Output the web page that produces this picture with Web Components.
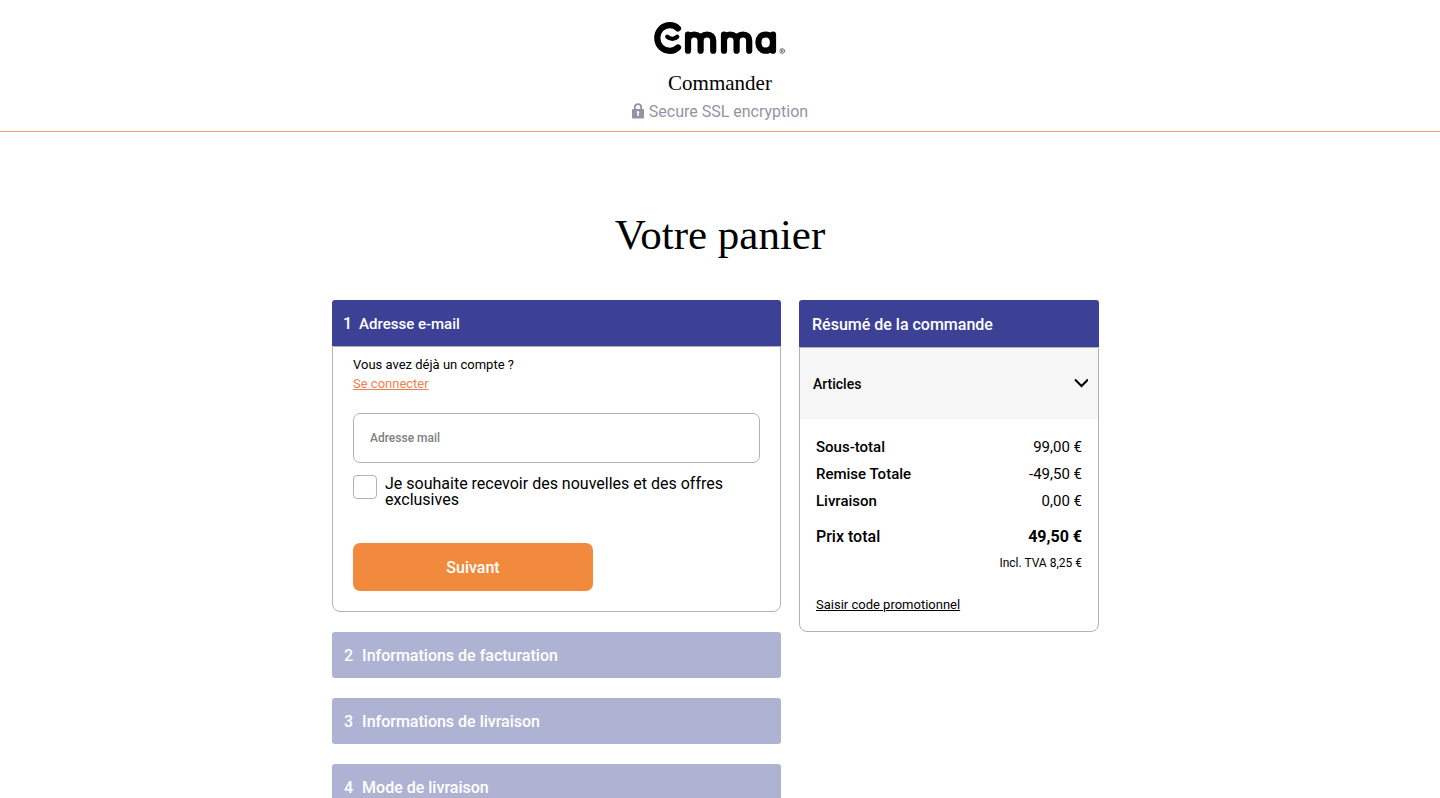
<!DOCTYPE html>
<html lang="fr">
<head>
<meta charset="utf-8">
<meta name="viewport" content="width=device-width, initial-scale=1">
<title>Emma – Votre panier</title>
<style>
  body { margin: 0; background: #fff; color: #000; font: 16px/24px Roboto, "Liberation Sans", sans-serif; }
</style>
</head>
<body>
<checkout-page></checkout-page>
<script>
const define = (name, html, setup) => {
  const template = document.createElement('template');
  template.innerHTML = '<style>*{box-sizing:border-box}:host{display:block}</style>' + html;
  customElements.define(name, class extends HTMLElement {
    constructor() {
      super();
      this.attachShadow({ mode: 'open' }).append(template.content.cloneNode(true));
    }
    connectedCallback() { if (setup) setup(this, this.shadowRoot); }
  });
};

define('emma-logo', `
<style>
  :host { height: 34px; }
  svg { display: block; }
</style>
<svg width="132" height="34" viewBox="654 21 132 34" role="img" aria-label="Emma" fill="none" stroke="#000" stroke-width="6.200" stroke-linecap="round" stroke-linejoin="round">
  <path d="M678 28.400C675.800 26.300 673.200 25.200 670 25.200C662.600 25.200 657.300 30.800 657.300 38C657.300 45.200 662.600 50.800 670 50.800C673.200 50.800 675.800 49.700 678 47.500"/>
  <path stroke-width="4.400" d="M667.300 36.800C670 39.500 674.700 39.500 677.200 36.800"/>
  <path d="M688 50.700V34.500M688 41C688 36.700 690.300 34.500 694.200 34.500C698.200 34.500 700.600 36.800 700.600 41V50.700M700.600 41C700.600 36.700 703 34.500 707 34.500C711 34.500 713.200 36.800 713.200 41V50.700"/>
  <path d="M724 50.700V34.500M724 41C724 36.700 726.300 34.500 730.200 34.500C734.200 34.500 736.600 36.800 736.600 41V50.700M736.600 41C736.600 36.700 739 34.500 743 34.500C747 34.500 749.200 36.800 749.200 41V50.700"/>
  <path d="M773 34.500V50.700M773 42.500C773 47.300 770 50.700 765.700 50.700C761.400 50.700 758.400 47.300 758.400 42.500C758.400 37.700 761.400 34.500 765.700 34.500C770 34.500 773 37.700 773 42.500Z"/>
  <g stroke="#444" stroke-width=".6"><circle cx="782.200" cy="51" r="2.500"/><path d="M781.400 52.400V49.700H782.300C783.400 49.700 783.400 51.100 782.300 51.100H781.400M782.400 51.100L783.200 52.400"/></g>
</svg>`);

define('checkout-header', `
<style>
  header { display: flex; flex-direction: column; align-items: center; padding-top: 21px; border-bottom: 1px solid #f3a35f; }
  .title { margin: 16px 0 0; font: 21px/24px "Liberation Serif", serif; }
  .secure { display: flex; align-items: center; gap: 5px; margin: 5px 0 7px; line-height: 24px; color: #9394a3; }
</style>
<header>
  <emma-logo></emma-logo>
  <p class="title">Commander</p>
  <p class="secure">
    <svg width="12" height="18" viewBox="0 0 12 18" aria-hidden="true"><path d="M2.900 7V4.300a3.100 3.100 0 0 1 6.200 0V7" fill="none" stroke="#9394a3" stroke-width="1.800"/><rect y="6" width="12" height="9.500" rx="1" fill="#9394a3"/><path d="M4.700 9.500a1.300 1.300 0 1 1 2 .9l.3 2.400H5l.4-2.400z" fill="#fff"/></svg>
    <span>Secure SSL encryption</span>
  </p>
</header>`);

define('step-heading', `
<style>
  h2 { display: flex; gap: 9px; margin: 0; padding: 12px 12px 10px; height: 46px; border-radius: 3px; background: #afb3d3; color: #fff; font-size: 16px; line-height: 24px; font-weight: 500; }
  :host([active]) h2 { padding-left: 11px; background: #3d4196; border-radius: 3px 3px 0 0; font-size: 15px; gap: 7px; }
  .n { font-size: 16px; }
</style>
<h2><span class="n"></span><slot></slot></h2>`, (el, root) => {
  root.querySelector('.n').textContent = el.getAttribute('number');
});

define('email-step', `
<style>
  .body { padding: 8px 20px 20px; border: 1px solid #b2b2b2; border-radius: 0 0 8px 8px; }
  p { margin: 0; font-size: 13px; line-height: 19px; }
  a { color: #f27f50; }
  .field { display: block; width: 100%; height: 50px; margin-top: 20px; padding: 0 16px; border: 1px solid #b2b2b2; border-radius: 7px; background: #fff; font: 500 12px/16px Roboto, sans-serif; color: #000; }
  .field::placeholder { color: #808080; opacity: 1; }
  .news { display: flex; gap: 8px; margin-top: 12px; line-height: 16px; }
  .news input { appearance: none; flex: none; width: 24px; height: 24px; margin: 0; border: 1px solid #b2b2b2; border-radius: 4px; background: #fff; }
  .news input:checked { background: #3d4196; }
  .news label { padding-top: 1px; }
  button { display: block; width: 240px; height: 48px; margin-top: 35px; padding: 2px 0 0; border: 0; border-radius: 7px; background: #f28a3d; color: #fff; font: 500 16px/24px Roboto, sans-serif; }
</style>
<step-heading number="1" active>Adresse e-mail</step-heading>
<form class="body">
  <p>Vous avez déjà un compte ?</p>
  <p><a href="#login">Se connecter</a></p>
  <input class="field" type="email" placeholder="Adresse mail" aria-label="Adresse mail">
  <div class="news"><input type="checkbox" id="news"><label for="news">Je souhaite recevoir des nouvelles et des offres exclusives</label></div>
  <button type="button">Suivant</button>
</form>`);

define('order-summary', `
<style>
  h2 { margin: 0; padding: 13px 13px 10px; background: #3d4196; border-radius: 3px 3px 0 0; color: #fff; font-size: 16px; line-height: 24px; font-weight: 500; }
  .box { border: 1px solid #b2b2b2; border-radius: 0 0 8px 8px; }
  .items { display: flex; align-items: center; justify-content: space-between; width: 100%; height: 71px; padding: 0 10px 0 13px; border: 0; background: #f6f6f6; color: #000; font: 500 14px/24px Roboto, sans-serif; }
  .sums { padding: 15px 16px 17px; }
  table { width: 100%; border-collapse: collapse; font-size: 15px; line-height: 27px; }
  th, td { padding: 0; }
  th { text-align: left; font-weight: 500; }
  td { text-align: right; }
  .total th, .total td { padding-top: 9px; font-size: 16px; line-height: 26px; font-weight: 500; }
  .total td { font-weight: 700; }
  .vat td { font-size: 12px; line-height: 27px; }
  a { display: block; margin-top: 18px; color: #000; font-size: 13px; line-height: 19px; }
</style>
<h2>Résumé de la commande</h2>
<div class="box">
  <button class="items" type="button"><span>Articles</span><svg width="14" height="14" viewBox="0 0 14 14" fill="none" stroke="#000" stroke-width="2" aria-hidden="true"><path d="M1 2.500L7.500 9L14 2.500"/></svg></button>
  <div class="sums">
    <table>
      <tr><th scope="row">Sous-total</th><td>99,00 €</td></tr>
      <tr><th scope="row">Remise Totale</th><td>-49,50 €</td></tr>
      <tr><th scope="row">Livraison</th><td>0,00 €</td></tr>
      <tr class="total"><th scope="row">Prix total</th><td>49,50 €</td></tr>
      <tr class="vat"><td colspan="2">Incl. TVA 8,25 €</td></tr>
    </table>
    <a href="#promo">Saisir code promotionnel</a>
  </div>
</div>`);

define('checkout-page', `
<style>
  h1 { margin: 78px 0 40px; text-align: center; font: 43px/50px "Liberation Serif", serif; }
  main { display: grid; grid-template-columns: minmax(0, 1fr) 300px; gap: 18px; align-items: start; max-width: 776px; margin: 0 auto; padding-right: 9px; }
  .steps { display: grid; gap: 20px; }
</style>
<checkout-header></checkout-header>
<h1>Votre panier</h1>
<main>
  <div class="steps">
    <email-step></email-step>
    <step-heading number="2">Informations de facturation</step-heading>
    <step-heading number="3">Informations de livraison</step-heading>
    <step-heading number="4">Mode de livraison</step-heading>
  </div>
  <order-summary></order-summary>
</main>`);
</script>
</body>
</html>
